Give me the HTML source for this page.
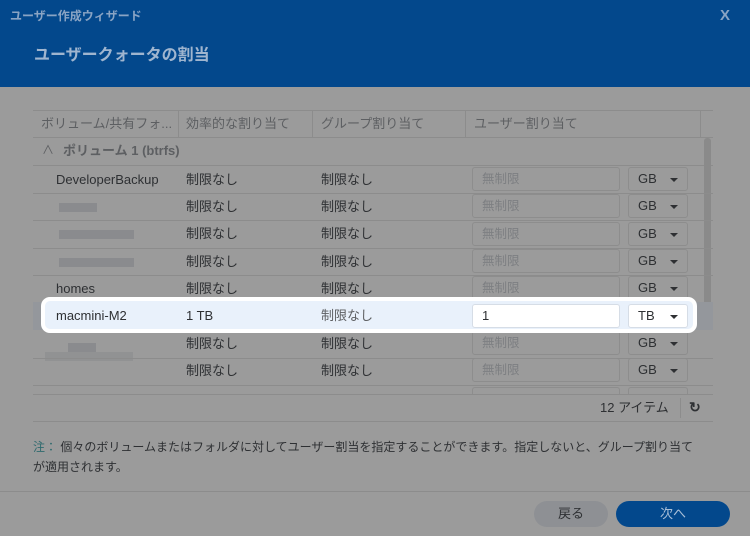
<!DOCTYPE html>
<html><head><meta charset="utf-8"><style>
*{margin:0;padding:0;box-sizing:border-box}
body{width:750px;height:536px;overflow:hidden;background:#9b9b9b;font-family:"Liberation Sans","Noto Sans CJK JP",sans-serif;color:#2e3033;position:relative}
.a{position:absolute;white-space:nowrap}
.hdr{left:0;top:0;width:750px;height:87px;background:#03488c}
.hl{height:1px;background:#8c8c8c;left:33px;width:680px}
.t{font-size:13px;line-height:16px}
.inp{position:absolute;left:472px;width:148px;height:24px;border:1px solid #8d8d8d;border-radius:3px;color:#7d7f82;font-size:12.5px;line-height:14px;padding:4px 9px}
.sel{position:absolute;left:628px;width:60px;height:24px;border:1px solid #8d8d8d;border-radius:3px;font-size:13px;line-height:14px;padding:4px 9px}
.sel:after{content:"";position:absolute;right:9px;top:10px;border-left:4px solid transparent;border-right:4px solid transparent;border-top:4px solid #2e3033}
.blur{position:absolute;height:9px;background:#7f8185;opacity:.6}
</style></head><body>
<div class="a hdr"></div>
<div class="a" style="left:10px;top:8px;font-size:12px;line-height:16px;color:#8aa4c4;font-weight:bold">ユーザー作成ウィザード</div>
<div class="a" style="left:720px;top:7px;font-size:15px;color:#8aa4c4;font-weight:bold">X</div>
<div class="a" style="left:34px;top:46px;font-size:16px;line-height:20px;color:#9fb5cf;font-weight:bold">ユーザークォータの割当</div>

<div class="a hl" style="top:110px"></div>
<div class="a hl" style="top:137px"></div>
<div class="a" style="left:178px;top:110px;width:1px;height:27px;background:#8c8c8c"></div>
<div class="a" style="left:312px;top:110px;width:1px;height:27px;background:#8c8c8c"></div>
<div class="a" style="left:465px;top:110px;width:1px;height:27px;background:#8c8c8c"></div>
<div class="a" style="left:700px;top:110px;width:1px;height:27px;background:#8c8c8c"></div>
<div class="a t" style="left:41px;top:116px;color:#5d5f62">ボリューム/共有フォ...</div>
<div class="a t" style="left:186px;top:116px;color:#5d5f62">効率的な割り当て</div>
<div class="a t" style="left:321px;top:116px;color:#5d5f62">グループ割り当て</div>
<div class="a t" style="left:474px;top:116px;color:#5d5f62">ユーザー割り当て</div>
<div class="a" style="left:42px;top:143px;font-size:12px;line-height:14px;color:#5d5f62">∧</div>
<div class="a t" style="left:63px;top:143px;color:#5d5f62;font-weight:bold">ポリューム 1 (btrfs)</div>
<div class="a hl" style="top:165px"></div>
<div class="a" style="left:704px;top:138px;width:7px;height:183px;border-radius:3px;background:#8a8a8a"></div>

<div class="a t" style="left:56px;top:172px">DeveloperBackup</div>
<div class="a t" style="left:56px;top:281px">homes</div>
<div class="blur" style="left:59px;top:203px;width:38px"></div>
<div class="blur" style="left:59px;top:230px;width:75px"></div>
<div class="blur" style="left:59px;top:258px;width:75px"></div>
<div class="blur" style="left:68px;top:343px;width:28px"></div>
<div class="blur" style="left:45px;top:352px;width:88px;opacity:.35"></div>

<div class="a hl" style="top:193px"></div><div class="a hl" style="top:220px"></div><div class="a hl" style="top:248px"></div><div class="a hl" style="top:275px"></div><div class="a hl" style="top:302px"></div><div class="a hl" style="top:358px"></div><div class="a hl" style="top:385px"></div>

<div class="a t" style="left:186px;top:172px">制限なし</div><div class="a t" style="left:321px;top:172px">制限なし</div>
<div class="a t" style="left:186px;top:199px">制限なし</div><div class="a t" style="left:321px;top:199px">制限なし</div>
<div class="a t" style="left:186px;top:226px">制限なし</div><div class="a t" style="left:321px;top:226px">制限なし</div>
<div class="a t" style="left:186px;top:254px">制限なし</div><div class="a t" style="left:321px;top:254px">制限なし</div>
<div class="a t" style="left:186px;top:281px">制限なし</div><div class="a t" style="left:321px;top:281px">制限なし</div>
<div class="a t" style="left:186px;top:336px">制限なし</div><div class="a t" style="left:321px;top:336px">制限なし</div>
<div class="a t" style="left:186px;top:363px">制限なし</div><div class="a t" style="left:321px;top:363px">制限なし</div>

<div class="inp" style="top:167px">無制限</div><div class="sel" style="top:167px">GB</div>
<div class="inp" style="top:194px">無制限</div><div class="sel" style="top:194px">GB</div>
<div class="inp" style="top:222px">無制限</div><div class="sel" style="top:222px">GB</div>
<div class="inp" style="top:249px">無制限</div><div class="sel" style="top:249px">GB</div>
<div class="inp" style="top:276px">無制限</div><div class="sel" style="top:276px">GB</div>
<div class="inp" style="top:331px">無制限</div><div class="sel" style="top:331px">GB</div>
<div class="inp" style="top:358px">無制限</div><div class="sel" style="top:358px">GB</div>
<div class="a" style="left:472px;top:387px;width:148px;height:7px;border:1px solid #8d8d8d;border-bottom:none;border-radius:3px 3px 0 0"></div>
<div class="a" style="left:628px;top:387px;width:60px;height:7px;border:1px solid #8d8d8d;border-bottom:none;border-radius:3px 3px 0 0"></div>
<div class="a hl" style="top:394px"></div>

<div class="a" style="left:33px;top:302px;width:680px;height:28px;background:#94979c"></div>
<div class="a" style="left:41px;top:297px;width:656px;height:36px;border:4px solid #fff;border-radius:9px;background:#e9f1fb"></div>
<div class="a t" style="left:56px;top:308px">macmini-M2</div>
<div class="a t" style="left:186px;top:308px">1 TB</div>
<div class="a t" style="left:321px;top:308px;color:#5d5f62">制限なし</div>
<div class="a" style="left:472px;top:304px;width:148px;height:24px;background:#fff;border:1px solid #d6dde6;border-radius:3px;font-size:13px;line-height:14px;padding:4px 9px">1</div>
<div class="sel" style="top:304px;background:#fff;border-color:#d6dde6">TB</div>

<div class="a t" style="left:600px;top:400px">12 アイテム</div>
<div class="a" style="left:680px;top:398px;width:1px;height:20px;background:#8c8c8c"></div>
<div class="a" style="left:689px;top:399px;font-size:14px;line-height:16px;font-weight:bold">↻</div>
<div class="a hl" style="top:421px"></div>

<div class="a" style="left:33px;top:437px;font-size:12px;line-height:20px;width:700px"><span style="color:#2f6a6e">注：</span> 個々のボリュームまたはフォルダに対してユーザー割当を指定することができます。指定しないと、グループ割り当て<br>が適用されます。</div>
<div class="a" style="left:0;top:491px;width:750px;height:1px;background:#8c8c8c"></div>
<div class="a" style="left:534px;top:501px;width:74px;height:26px;border-radius:13px;background:#8e9094;font-size:13px;text-align:center;line-height:26px">戻る</div>
<div class="a" style="left:616px;top:501px;width:114px;height:26px;border-radius:13px;background:#03488c;color:#a9bfd8;font-size:13px;text-align:center;line-height:26px">次へ</div>
</body></html>
